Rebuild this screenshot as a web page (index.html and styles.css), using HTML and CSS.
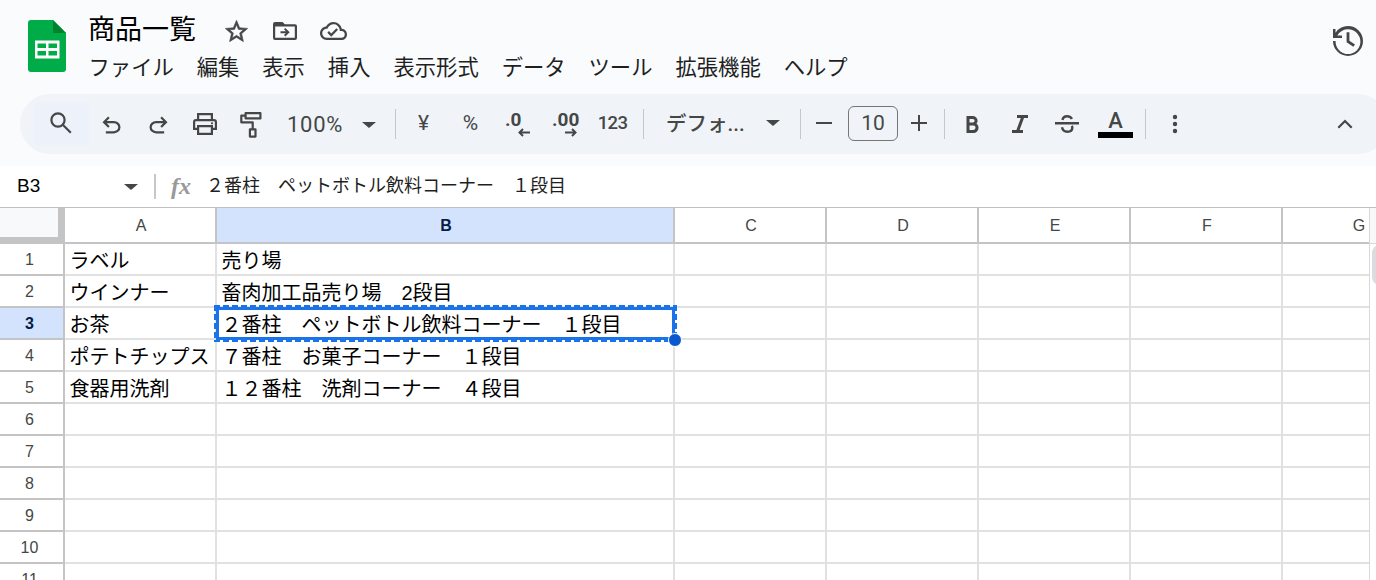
FILE: index.html
```html
<!DOCTYPE html>
<html lang="ja">
<head>
  <meta charset="UTF-8">
  <title>商品一覧</title>
  <link rel="stylesheet" href="styles.css">
</head>
<body>
  <header class="header">
    <svg class="logo" viewBox="0 0 38 52">
      <path fill="#00ac47" d="M3 0h22l13 13v36a3 3 0 0 1-3 3H3a3 3 0 0 1-3-3V3a3 3 0 0 1 3-3z"/>
      <path fill="#00832d" d="M25 0l13 13H25z"/>
      <path fill="#fff" fill-rule="evenodd" d="M7 20.500h24.500v18H7zM9.500 23.500v4.500h8.500v-4.500zM20.500 23.500v4.500h8.500v-4.500zM9.500 31v4.500h8.500V31zM20.500 31v4.500h8.500V31z"/>
    </svg>
    <div class="header-main">
      <div class="title-row">
        <h1 class="title">商品一覧</h1>
        <svg class="icon star" viewBox="0 0 24 24"><path stroke="#444746" stroke-width=".5" d="M22 9.240l-7.190-.62L12 2 9.190 8.630 2 9.240l5.460 4.730L5.820 21 12 17.270 18.180 21l-1.630-7.030L22 9.240zM12 15.400l-3.760 2.270 1-4.280-3.320-2.880 4.380-.38L12 6.100l1.710 4.040 4.380.38-3.320 2.880 1 4.280L12 15.400z"/></svg>
        <svg class="icon folder" viewBox="0 0 24 18"><path fill-rule="evenodd" d="M2 0h7.500l2.400 2.300H22a2 2 0 0 1 2 2V16a2 2 0 0 1-2 2H2a2 2 0 0 1-2-2V2a2 2 0 0 1 2-2zM2.200 4.500v11.300h19.600V4.500zM12.300 6l4.400 4.200-4.400 4.200-1.300-1.300 1.800-1.900H7.500V9.200h5.300L11 7.300z"/></svg>
        <svg class="icon cloud" viewBox="0 0 24 16"><path d="M19.350 6.040C18.670 2.590 15.640 0 12 0 9.110 0 6.600 1.640 5.350 4.040 2.340 4.360 0 6.910 0 10c0 3.310 2.690 6 6 6h13c2.760 0 5-2.240 5-5 0-2.640-2.050-4.780-4.650-4.960zM19 14H6c-2.210 0-4-1.790-4-4 0-2.050 1.530-3.760 3.560-3.970l1.070-.11.5-.95C8.080 3.140 9.940 2 12 2c2.620 0 4.880 1.860 5.390 4.430l.3 1.500 1.530.11c1.560.1 2.780 1.410 2.780 2.960 0 1.650-1.350 3-3 3zM10 10.180l-2.090-2.090L6.500 9.500 10 13l6.010-6.010-1.410-1.410z"/></svg>
      </div>
      <nav class="menu">
        <span>ファイル</span><span>編集</span><span>表示</span><span>挿入</span><span>表示形式</span><span>データ</span><span>ツール</span><span>拡張機能</span><span>ヘルプ</span>
      </nav>
    </div>
    <svg class="icon history" viewBox="0 0 30 30"><path d="M15 0A15 15 0 0 0 2.500 6.700V3H0v9h9V9.400H4.300A12.400 12.400 0 1 1 2.600 15H0A15 15 0 1 0 15 0zM13.600 6.200v10l6.700 4.600 1.700-2.300-5.600-3.800V6.200z"/></svg>
  </header>

  <div class="toolbar">
    <div class="tool search">
      <svg class="icon" width="22" height="22" viewBox="0 0 22 22"><g fill="none" stroke="#444746" stroke-width="2.200"><circle cx="8" cy="8" r="6.600"/><path d="M12.800 12.800l8 8"/></g></svg>
    </div>
    <div class="tool undo"><svg class="icon" width="27" height="27" viewBox="0 0 24 24"><path d="M7 19v-2h7.100q1.575 0 2.738-1T18 13.500q0-1.500-1.163-2.500T14.100 10H7.800l2.600 2.600L9 14 4 9l5-5 1.400 1.400L7.800 8h6.300q2.425 0 4.163 1.575T20 13.500q0 2.350-1.738 3.925T14.100 19H7z"/></svg></div>
    <div class="tool redo"><svg class="icon" width="27" height="27" viewBox="0 0 24 24"><path d="M7 19v-2h7.100q1.575 0 2.738-1T18 13.500q0-1.500-1.163-2.500T14.100 10H7.800l2.600 2.600L9 14 4 9l5-5 1.400 1.400L7.800 8h6.300q2.425 0 4.163 1.575T20 13.500q0 2.350-1.738 3.925T14.100 19H7z"/></svg></div>
    <div class="tool print"><svg class="icon" width="24" height="22" viewBox="0 0 24 22"><path fill-rule="evenodd" d="M4 0h16v6h1a3 3 0 0 1 3 3v8h-4v5H4v-5H0V9a3 3 0 0 1 3-3h1zM6.200 2.200V6h11.600V2.200zM3 8.200a.8.8 0 0 0-.8.8v5.800H4V12h16v2.800h1.800V9a.8.8 0 0 0-.8-.8zM6.200 14.200v5.600h11.600v-5.600z"/><circle cx="19" cy="10.300" r="1.100"/></svg></div>
    <div class="tool paint"><svg class="icon" width="22" height="26" viewBox="0 0 22 26"><g fill="none" stroke="#444746" stroke-width="2.200" stroke-linejoin="round"><path d="M5.600 1.100h14.800v5.300H5.600zM5.600 3.700H1.300v6.600h11.400v7"/><path d="M9.900 17.400h5.600v7.200H9.900z"/></g></svg></div>
    <div class="tool zoom"><span>100%</span><i class="arrow"></i></div>
    <i class="sep"></i>
    <div class="tool fmt yen">¥</div>
    <div class="tool fmt">%</div>
    <div class="tool decimal"><span>.0</span><svg class="icon" width="12" height="9" viewBox="0 0 12 9"><path fill="none" stroke="#444746" stroke-width="2" d="M12 4.500H1.500M5 1L1.500 4.500 5 8"/></svg></div>
    <div class="tool decimal"><span>.00</span><svg class="icon" width="12" height="9" viewBox="0 0 12 9"><path fill="none" stroke="#444746" stroke-width="2" d="M0 4.500h10.500M7 1l3.500 3.500L7 8"/></svg></div>
    <div class="tool fmt num">123</div>
    <i class="sep"></i>
    <div class="tool font"><span>デフォ...</span><i class="arrow"></i></div>
    <i class="sep"></i>
    <div class="tool minus"><svg class="icon" width="16" height="16" viewBox="0 0 16 16"><path d="M0 7h16v2H0z"/></svg></div>
    <div class="size">10</div>
    <div class="tool plus"><svg class="icon" width="16" height="16" viewBox="0 0 16 16"><path d="M0 7h7V0h2v7h7v2H9v7H7V9H0z"/></svg></div>
    <i class="sep"></i>
    <div class="tool bold"><svg class="icon" width="13" height="17" viewBox="0 0 13 17"><path fill="none" stroke="#444746" stroke-width="3" d="M2 1.500h4.800a3.300 3.300 0 0 1 0 6.600H2h5.400a3.600 3.600 0 0 1 0 7.300H2zM2 0v17"/></svg></div>
    <div class="tool"><svg class="icon" width="16" height="18" viewBox="0 0 16 18"><path d="M5 0h11v3h-4L7.600 15H11v3H0v-3h4.400L8.800 3H5z"/></svg></div>
    <div class="tool"><svg class="icon" width="24" height="18" viewBox="0 0 24 18"><path fill="none" stroke="#444746" stroke-width="2.400" d="M7.500 5C7.800 2.500 9.600 1.200 12.200 1.200c2.300 0 3.900 1 4.700 2.800M0 8.300h24M7 12.200c.6 2.900 2.600 4.500 5.300 4.500 3 0 5-1.600 5-4 0-.8-.2-1.300-.5-1.800"/></svg></div>
    <div class="tool color"><span>A</span><i></i></div>
    <i class="sep"></i>
    <div class="tool more"><svg class="icon" width="6" height="20" viewBox="0 0 6 20"><circle cx="3" cy="3" r="2.200"/><circle cx="3" cy="10" r="2.200"/><circle cx="3" cy="17" r="2.200"/></svg></div>
    <div class="tool collapse"><svg class="icon" width="16" height="10" viewBox="0 0 16 10"><path fill="none" stroke="#444746" stroke-width="2.200" d="M1.300 8.700L8 2l6.700 6.700"/></svg></div>
  </div>

  <div class="formula-bar">
    <div class="name-box"><span>B3</span><i class="arrow"></i></div>
    <div class="fx"><em>fx</em></div>
    <div class="formula">２番柱　ペットボトル飲料コーナー　１段目</div>
  </div>

  <div class="sheet">
    <table class="grid">
      <colgroup>
        <col class="col-num"><col class="col"><col class="col-b"><col class="col"><col class="col"><col class="col"><col class="col"><col class="col">
      </colgroup>
      <tr class="head"><th class="corner"></th><th>A</th><th class="active">B</th><th>C</th><th>D</th><th>E</th><th>F</th><th>G</th></tr>
      <tr><th>1</th><td>ラベル</td><td>売り場</td><td></td><td></td><td></td><td></td><td></td></tr>
      <tr><th>2</th><td>ウインナー</td><td>畜肉加工品売り場　2段目</td><td></td><td></td><td></td><td></td><td></td></tr>
      <tr><th class="active">3</th><td>お茶</td><td class="selected">２番柱　ペットボトル飲料コーナー　１段目<svg class="marquee" width="463" height="37"><rect x="3.500" y="3.500" width="456" height="30" stroke-width="3"/><path class="dash" stroke-width="2" d="M0 1h463M0 36h463M1 0v37M462 0v37"/></svg><i class="handle"></i></td><td></td><td></td><td></td><td></td><td></td></tr>
      <tr><th>4</th><td>ポテトチップス</td><td>７番柱　お菓子コーナー　１段目</td><td></td><td></td><td></td><td></td><td></td></tr>
      <tr><th>5</th><td>食器用洗剤</td><td>１２番柱　洗剤コーナー　４段目</td><td></td><td></td><td></td><td></td><td></td></tr>
      <tr><th>6</th><td></td><td></td><td></td><td></td><td></td><td></td><td></td></tr>
      <tr><th>7</th><td></td><td></td><td></td><td></td><td></td><td></td><td></td></tr>
      <tr><th>8</th><td></td><td></td><td></td><td></td><td></td><td></td><td></td></tr>
      <tr><th>9</th><td></td><td></td><td></td><td></td><td></td><td></td><td></td></tr>
      <tr><th>10</th><td></td><td></td><td></td><td></td><td></td><td></td><td></td></tr>
      <tr><th>11</th><td></td><td></td><td></td><td></td><td></td><td></td><td></td></tr>
    </table>
    <div class="scrollbar"><div class="scroll-top"></div><div class="thumb"></div></div>
  </div>
</body>
</html>
```

FILE: styles.css
```css
* {
  box-sizing: border-box;
}

body {
  margin: 0;
  height: 580px;
  overflow: hidden;
  display: flex;
  flex-direction: column;
  background: #f9fbfd;
  color: #1f1f1f;
  font-family: "Liberation Sans", "Noto Sans CJK JP", sans-serif;
}

.icon {
  display: block;
  flex: none;
  fill: #444746;
}

/* header */
.header {
  display: flex;
  flex: none;
  height: 94px;
  padding: 0 13px 0 28px;
}

.logo {
  width: 38px;
  height: 52px;
  margin-top: 20px;
}

.header-main {
  flex: 1;
  margin-left: 22px;
}

.title-row {
  display: flex;
  align-items: center;
  height: 40px;
  margin-top: 9px;
}

.title {
  margin: 0 0 2px;
  color: #000;
  font: 400 27px/38px "Noto Sans CJK JP", sans-serif;
}

.star {
  width: 27px;
  height: 27px;
  margin: 4px 0 0 27px;
}

.folder {
  width: 24px;
  height: 18px;
  margin: 4px 0 0 23px;
}

.cloud {
  width: 27px;
  height: 18px;
  margin: 3px 0 0 23px;
}

.menu {
  display: flex;
  gap: 22.900px;
  margin-left: 0.500px;
  font: 21.330px/34px "Noto Sans CJK JP", sans-serif;
}

.history {
  width: 30px;
  height: 30px;
  margin-top: 26px;
}

/* toolbar */
.toolbar {
  display: flex;
  flex: none;
  align-items: center;
  width: 1368px;
  height: 60px;
  margin-left: 20px;
  padding-left: 14px;
  border-radius: 30px;
  background: #f0f4f9;
  color: #444746;
  font-family: Roboto, "Noto Sans CJK JP", sans-serif;
}

.tool {
  display: flex;
  flex: none;
  align-items: center;
  justify-content: center;
  width: 47px;
  height: 42px;
}

.search {
  width: 55px;
  padding: 0 2px 3px 0;
  background: #edf1fa;
}

.undo,
.redo {
  width: 46px;
  padding-top: 3px;
}

.undo {
  padding-right: 2px;
}

.redo .icon {
  transform: scaleX(-1);
}

.print {
  width: 48px;
}

.paint {
  width: 45px;
  padding: 1px 2px 0 0;
}

.zoom {
  width: 121px;
  justify-content: space-between;
  padding: 1px 19px 0 13px;
  font-size: 22px;
  letter-spacing: 0.700px;
}

.arrow {
  flex: none;
  border: 7px solid transparent;
  border-top: 6px solid #444746;
  border-bottom: 0;
}

.sep {
  flex: none;
  width: 1px;
  height: 30px;
  background: #c7c7c7;
}

.fmt {
  padding-bottom: 3px;
  font-size: 21px;
}

.yen {
  margin-left: 4px;
}

.num {
  width: 48px;
  margin-right: 7px;
  padding: 0 0 2px 1px;
  font-size: 18.500px;
  font-weight: 500;
  letter-spacing: -0.600px;
}

.decimal {
  flex-direction: column;
  align-items: flex-start;
  padding-left: 11px;
  font-size: 19px;
  font-weight: 700;
  line-height: 17px;
}

.decimal .icon {
  margin-left: 13px;
}

.font {
  width: 156px;
  justify-content: space-between;
  padding: 0 20px 4px 22px;
  font-size: 20.500px;
  font-weight: 500;
}

.font .arrow {
  margin-top: 1px;
}

.minus {
  width: 45px;
}

.size {
  flex: none;
  width: 50px;
  height: 35px;
  margin: 0 0 1px 2px;
  border: 1px solid #747775;
  border-radius: 6px;
  text-align: center;
  font-size: 21px;
  line-height: 33px;
}

.plus {
  width: 42px;
  margin-right: 4px;
}

.minus,
.plus {
  padding-bottom: 2px;
}

.bold {
  margin-left: 4px;
}

.color {
  flex-direction: column;
  margin-left: 2px;
  padding-bottom: 1px;
  font-size: 22px;
  font-weight: 500;
  line-height: 22px;
}

.color i {
  width: 35px;
  height: 6px;
  background: #000;
}

.color + .sep {
  margin-left: 6px;
}

.more {
  margin-left: 5px;
}

.collapse {
  margin: 0 20px 0 auto;
}

/* formula bar */
.formula-bar {
  display: flex;
  flex: none;
  align-items: center;
  height: 41px;
  margin-top: 12px;
  background: #fff;
}

.name-box {
  display: flex;
  align-items: center;
  justify-content: space-between;
  width: 156px;
  height: 25px;
  padding: 0 16px 2px 17px;
  border-right: 2px solid #c7c7c7;
  color: #000;
  font-size: 19px;
}

.name-box .arrow {
  margin-top: 2px;
}

.fx {
  width: 50px;
  padding-left: 15px;
  color: #999;
  font: bold 24px "Liberation Serif", serif;
}

.formula {
  margin-bottom: 5px;
  font: 18px/26px "Noto Sans CJK JP", sans-serif;
  white-space: pre;
}

/* sheet */
.sheet {
  display: flex;
  flex: 1;
  min-height: 0;
  overflow: hidden;
  border-top: 1px solid #c0c0c0;
  background: #fff;
}

.grid {
  flex: none;
  align-self: flex-start;
  width: 1435px;
  margin-right: -66px;
  table-layout: fixed;
  border-collapse: separate;
  border-spacing: 0;
}

.col-num {
  width: 65px;
}

.col {
  width: 152px;
}

.col-b {
  width: 458px;
}

.grid tr {
  height: 32px;
}

.grid .head {
  height: 36px;
}

.grid th {
  padding: 1px 0 0 2px;
  border: 0 solid #c4c4c4;
  border-width: 0 2px 2px 0;
  color: #444746;
  font-size: 16px;
  font-weight: 400;
  line-height: 18px;
}

.grid tr:not(.head) th {
  padding: 1px 4px 0 0;
}

.grid .corner {
  border-width: 0 7px 7px 0;
  background: #f8f9fa;
}

.grid th.active {
  background: #d3e3fd;
  color: #041e49;
  font-weight: 700;
}

.grid td {
  padding: 4px 0 0 4.500px;
  border: 0 solid #e1e1e1;
  border-width: 0 2px 2px 0;
  color: #000;
  font-size: 20px;
  line-height: 26px;
  white-space: pre;
}

.grid .selected {
  position: relative;
}

.marquee {
  position: absolute;
  top: -3px;
  left: -3px;
  z-index: 1;
  fill: none;
  stroke: #1a73e8;
}

.dash {
  stroke-dasharray: 6 3;
}

.handle {
  position: absolute;
  right: -9px;
  bottom: -9px;
  z-index: 2;
  width: 14px;
  height: 14px;
  border: 1px solid #fff;
  border-radius: 50%;
  background: #0b57d0;
}

.scrollbar {
  position: relative;
  z-index: 1;
  flex: none;
  width: 7px;
  border-left: 1px solid #d9d9d9;
  background: #fff;
}

.scroll-top {
  height: 36px;
  border-bottom: 1px solid #d9d9d9;
  background: #f8f8f8;
}

.thumb {
  width: 16px;
  height: 40px;
  margin: 1px 0 0 2px;
  border-radius: 8px;
  background: #dadce0;
}
```
